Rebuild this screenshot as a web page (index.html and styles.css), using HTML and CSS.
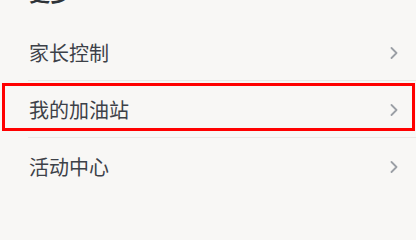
FILE: index.html
```html
<!DOCTYPE html>
<html lang="zh-CN">
<head>
<meta charset="utf-8">
<link rel="stylesheet" href="styles.css">
</head>
<body>
<div class="page">
  <h2 class="title">更多</h2>
  <ul class="menu">
    <li class="item">
      <div class="row"><span class="label">家长控制</span>
        <svg class="chev" width="8" height="12" viewBox="0 0 8 12"><polyline points="1.5,1 6.5,6 1.5,11" fill="none" stroke="#9b9fa5" stroke-width="1.8" stroke-linecap="round" stroke-linejoin="round"/></svg>
      </div>
    </li>
    <li class="item highlighted">
      <div class="row"><span class="label">我的加油站</span>
        <svg class="chev" width="8" height="12" viewBox="0 0 8 12"><polyline points="1.5,1 6.5,6 1.5,11" fill="none" stroke="#9b9fa5" stroke-width="1.8" stroke-linecap="round" stroke-linejoin="round"/></svg>
      </div>
      <div class="mark"></div>
    </li>
    <li class="item">
      <div class="row"><span class="label">活动中心</span>
        <svg class="chev" width="8" height="12" viewBox="0 0 8 12"><polyline points="1.5,1 6.5,6 1.5,11" fill="none" stroke="#9b9fa5" stroke-width="1.8" stroke-linecap="round" stroke-linejoin="round"/></svg>
      </div>
    </li>
  </ul>
</div>
</body>
</html>
```
FILE: styles.css
```css
html, body {
  margin: 0;
  padding: 0;
  background: #f8f7f5;
  overflow: hidden;
}
.page {
  width: 416px;
  height: 203px;
  font-family: "Noto Sans CJK SC", "Noto Sans", sans-serif;
}
.title {
  margin: -18px 0 0 0;
  padding-left: 29px;
  height: 20px;
  font-size: 21px;
  line-height: 20px;
  font-weight: 700;
  color: #2e3338;
}
.menu {
  list-style: none;
  margin: 22px 0 0 0;
  padding: 0;
}
.item {
  position: relative;
  padding-left: 28px;
}
.row {
  height: 56px;
  padding-top: 1px;
  box-sizing: border-box;
  height: 57px;
  display: flex;
  align-items: center;
  justify-content: space-between;
  border-bottom: 1px solid #e9e8e6;
  padding-right: 18px;
}
.label {
  padding-left: 1px;
  font-size: 20px;
  line-height: 24px;
  color: #3d4148;
}
.chev {
  display: block;
}
.mark {
  position: absolute;
  left: 2px;
  right: 1px;
  top: 2px;
  height: 48px;
  border: 3px solid #ff0000;
  box-sizing: border-box;
}
```
